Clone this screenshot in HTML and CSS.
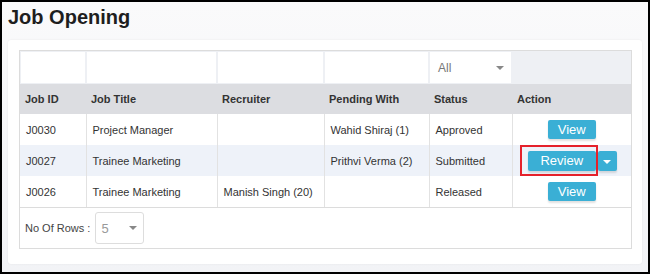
FILE: index.html
```html
<!DOCTYPE html>
<html lang="en">
<head>
    <meta charset="UTF-8">
    <title>Job Opening</title>
    <link rel="stylesheet" href="styles.css">
</head>
<body>
    <div class="frame">
        <h1 class="page-title">Job Opening</h1>

        <div class="card">
            <div class="grid-box">
                <table class="grid">
                    <colgroup>
                        <col class="c-id">
                        <col class="c-title">
                        <col class="c-rec">
                        <col class="c-pend">
                        <col class="c-status">
                        <col class="c-action">
                    </colgroup>
                    <thead>
                        <tr class="filters">
                            <th><div class="filter-box"></div></th>
                            <th><div class="filter-box"></div></th>
                            <th><div class="filter-box"></div></th>
                            <th><div class="filter-box"></div></th>
                            <th><div class="filter-box select-box">All<span class="caret"></span></div></th>
                            <th></th>
                        </tr>
                        <tr class="heads">
                            <th>Job ID</th>
                            <th>Job Title</th>
                            <th>Recruiter</th>
                            <th>Pending With</th>
                            <th>Status</th>
                            <th>Action</th>
                        </tr>
                    </thead>
                    <tbody>
                        <tr>
                            <td>J0030</td>
                            <td>Project Manager</td>
                            <td></td>
                            <td>Wahid Shiraj (1)</td>
                            <td>Approved</td>
                            <td class="action"><button class="btn">View</button></td>
                        </tr>
                        <tr class="alt">
                            <td>J0027</td>
                            <td>Trainee Marketing</td>
                            <td></td>
                            <td>Prithvi Verma (2)</td>
                            <td>Submitted</td>
                            <td class="action">
                                <span class="btn-group">
                                    <span class="highlight"><button class="btn btn-review">Review</button></span>
                                    <button class="btn btn-caret"><span class="caret caret-white"></span></button>
                                </span>
                            </td>
                        </tr>
                        <tr class="last">
                            <td>J0026</td>
                            <td>Trainee Marketing</td>
                            <td>Manish Singh (20)</td>
                            <td></td>
                            <td>Released</td>
                            <td class="action"><button class="btn">View</button></td>
                        </tr>
                    </tbody>
                </table>

                <div class="pager">
                    <label class="pager-label">No Of Rows :</label>
                    <div class="rows-select">5<span class="caret"></span></div>
                </div>
            </div>
        </div>
    </div>
</body>
</html>
```

FILE: styles.css
```css
body {
    margin: 0;
    font-family: "Liberation Sans", Arial, sans-serif;
    color: #333;
}

.frame {
    width: 650px;
    height: 274px;
    box-sizing: border-box;
    border: 2px solid #000;
    background: linear-gradient(#fafafb, #f2f3f6);
    overflow: hidden;
}

.page-title {
    margin: 0;
    padding: 4px 0 0 6px;
    font-size: 20px;
    line-height: 23px;
    font-weight: bold;
    color: #1e1e1e;
}

.card {
    margin: 11px 6px 0 6px;
    height: 224px;
    box-sizing: border-box;
    padding: 10px 10px 15px 11px;
    background: #fff;
    border-radius: 3px;
    box-shadow: 0 0 2px rgba(0, 0, 0, 0.08);
}

.grid-box {
    border: 1px solid #dcdcdc;
}

.grid {
    width: 100%;
    border-collapse: collapse;
    table-layout: fixed;
    font-size: 11px;
}

.c-id { width: 66px; }
.c-title { width: 131px; }
.c-rec { width: 107px; }
.c-pend { width: 105px; }
.c-status { width: 83px; }

.filters th {
    height: 33px;
    padding: 1px;
    background: #eef0f4;
    box-sizing: border-box;
}

.filter-box {
    height: 31px;
    background: #fff;
}

.select-box {
    display: flex;
    align-items: center;
    justify-content: space-between;
    padding: 0 7px 0 8px;
    font-size: 12px;
    font-weight: normal;
    color: #777;
    text-align: left;
}

.caret {
    width: 0;
    height: 0;
    border-left: 4px solid transparent;
    border-right: 4px solid transparent;
    border-top: 4px solid #888;
}

.caret-white {
    display: inline-block;
    border-top-color: #fff;
    vertical-align: middle;
}

.heads th {
    height: 30px;
    padding: 0 5px;
    background: #dcdde1;
    text-align: left;
    font-weight: bold;
    color: #333;
}

.grid td {
    height: 31px;
    padding: 0 6px;
    border-right: 1px solid #e2e2e2;
    color: #333;
}

.grid td:last-child {
    border-right: none;
}

.alt td {
    background: #eef2f9;
}

.last td {
    border-bottom: 1px solid #dcdcdc;
}

.action {
    text-align: center;
}

.btn {
    height: 19px;
    padding: 0;
    border: none;
    border-radius: 2px;
    background: #3aafd5;
    color: #fff;
    font-family: "Liberation Sans", Arial, sans-serif;
    font-size: 13px;
    line-height: 19px;
    box-shadow: 0 2px 2px rgba(0, 0, 0, 0.12);
    vertical-align: middle;
}

.action > .btn {
    width: 48px;
}

.btn-group {
    display: inline-flex;
    align-items: center;
    gap: 2px;
    margin-left: 1px;
}

.highlight {
    position: relative;
    display: inline-flex;
}

.highlight::before {
    content: "";
    position: absolute;
    left: -8px;
    top: -6px;
    right: -2px;
    bottom: -5px;
    border: 2px solid #e5212b;
}

.btn-review {
    width: 68px;
    height: 20px;
}

.btn-caret {
    width: 19px;
    height: 20px;
}

.pager {
    display: flex;
    align-items: center;
    gap: 5px;
    padding: 4px 5px;
    font-size: 11px;
    color: #444;
}

.rows-select {
    display: flex;
    align-items: center;
    justify-content: space-between;
    width: 49px;
    height: 32px;
    box-sizing: border-box;
    padding: 0 6px 0 5px;
    border: 1px solid #ddd;
    border-radius: 3px;
    font-size: 13px;
    color: #999;
}
```
